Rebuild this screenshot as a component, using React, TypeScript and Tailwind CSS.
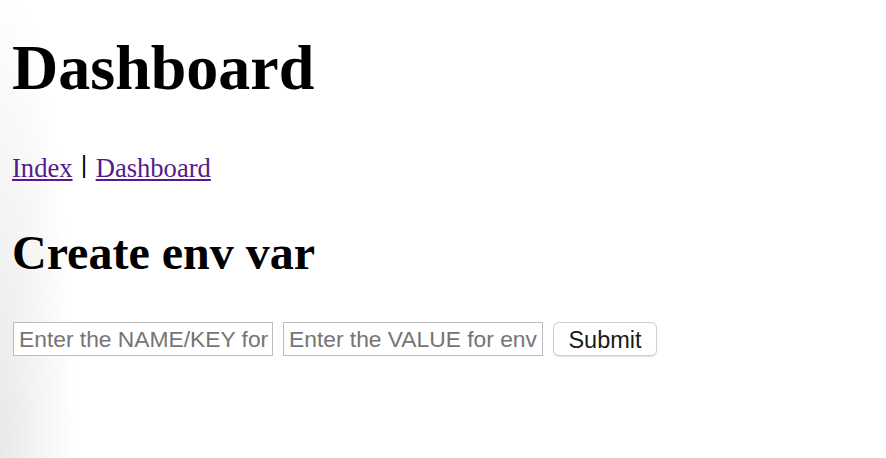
import { useState } from "react";

export default function App() {
  const [name, setName] = useState("");
  const [value, setValue] = useState("");

  return (
    <div className="min-h-[458px] w-full bg-[radial-gradient(ellipse_75px_480px_at_0%_100%,#e8e8e8,#ffffff)] pl-[12px] pt-px font-['Liberation_Serif',serif] text-black">
      <h1 className="mt-[30px] text-[64px] font-bold leading-[74px]">Dashboard</h1>

      <nav className="mt-[48px] h-[30px] text-[26.6px] leading-[30px]">
        <a href="#" className="text-[#551a8b] underline">
          Index
        </a>
        <span className="mx-[8.5px] font-['Liberation_Sans',sans-serif] text-[23.5px] leading-[10px] [vertical-align:4px]">|</span>
        <a href="#" className="text-[#551a8b] underline">
          Dashboard
        </a>
      </nav>

      <h2 className="mt-[42px] text-[48px] font-bold leading-[56px]">Create env var</h2>

      <form
        className="mt-[41px] flex items-center gap-[10px] font-['Liberation_Sans',sans-serif]"
        onSubmit={(e) => e.preventDefault()}
      >
        <input
          value={name}
          onChange={(e) => setName(e.target.value)}
          placeholder="Enter the NAME/KEY for env var"
          className="ml-px h-[34px] w-[260px] border border-[#bdbdbd] bg-white pl-[5px] pr-[3px] text-[22.8px] text-black placeholder:text-[#757575] outline-none"
        />
        <input
          value={value}
          onChange={(e) => setValue(e.target.value)}
          placeholder="Enter the VALUE for env var"
          className="h-[34px] w-[260px] border border-[#bdbdbd] bg-white pl-[5px] pr-[3px] text-[22.8px] text-black placeholder:text-[#757575] outline-none"
        />
        <button
          type="submit"
          className="h-[34px] w-[104px] rounded-[6px] border border-[#cfcfcf] bg-white text-[23.5px] text-[#1a1a1a] shadow-[0_1px_1px_rgba(0,0,0,0.12)]"
        >
          Submit
        </button>
      </form>
    </div>
  );
}
